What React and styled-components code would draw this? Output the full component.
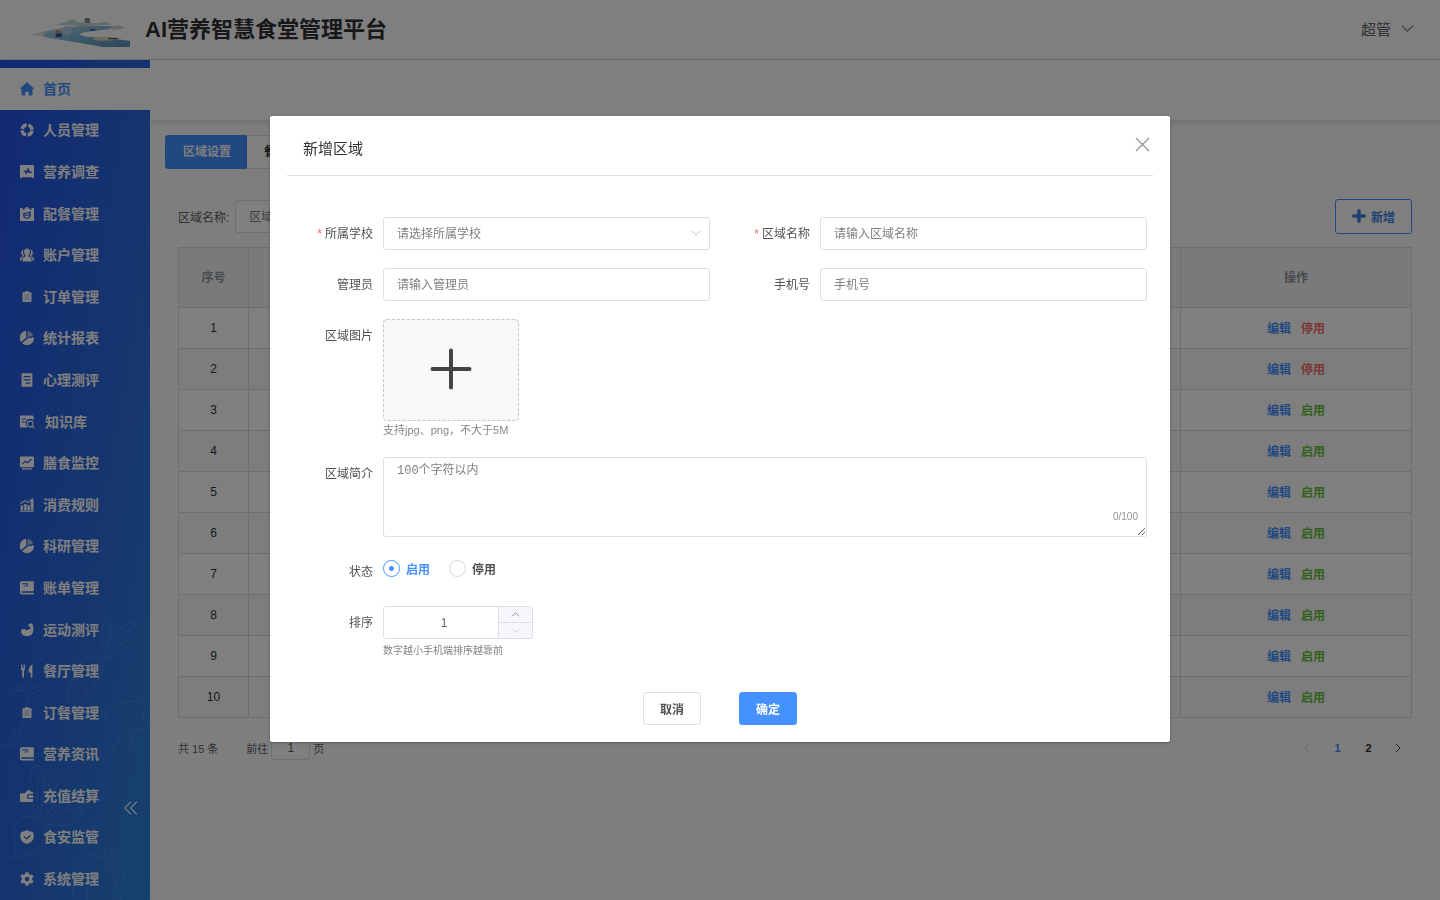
import React, { useState } from 'react';
import styled, { createGlobalStyle } from 'styled-components';

const icons = {
  home: <path d="M7 .4c.3 0 .5.1.7.3l6 5.500c.3.300.2.800-.3.800h-.900v5.600c0 .6-.4 1-1 1H8.800V9.800H5.200v3.800H2.500c-.6 0-1-.4-1-1V7H.6c-.5 0-.6-.5-.3-.8l6-5.500C6.500.5 6.700.4 7 .4z" />,
  ring: (
    <g fill="none" stroke="currentColor" strokeWidth="3.4">
      <circle cx="7" cy="7" r="5" strokeDasharray="6.2 1.65" strokeDashoffset="-0.8" />
    </g>
  ),
  survey: (
    <path fillRule="evenodd" d="M1 0h12a1 1 0 0 1 1 1v12.6l-2.4-1.4H2.4L0 13.6V1a1 1 0 0 1 1-1zM2.400 6.600h2.400l1 3.200 2.200-3.400.8 1.600h2.800V6.400H9.900L8.200 2.600 6.200 6.200l-.6-1z" />
  ),
  meal: (
    <path fillRule="evenodd" d="M0 1h2.600v1.800h1.600V1.400h1.600V0h2.400v1.400h1.600v1.400h1.600V1H14v13H0zM3 7.400c0 2.800 1.600 4.400 4 4.400s4-1.600 4-4.400l-.8-1.200 1-1.400-1.400-.6L8 5.400H5.400L3 6.400zM4.200 7.400l2-.8h2.600l1 1.200H4.200zM4.200 8.800h5.400c-.6 1.300-1.400 1.800-2.600 1.800s-2.200-.5-2.800-1.800z" />
  ),
  users: (
    <g>
      <path d="M7 .4c2 0 3 1.400 3 3.200 0 1.600-.7 2.800-1.400 3.600v1.200c1.600.5 2.900 1.300 2.900 3.200v1.800h-9v-1.800c0-1.900 1.300-2.700 2.900-3.200V7.200C4.700 6.400 4 5.200 4 3.600 4 1.800 5 .4 7 .4z" />
      <path d="M3.400 1.600C1.800 2 1.200 3.200 1.200 4.600c0 1.400.6 2.300 1.200 3v.8C1 9 0 9.600 0 11v1.400h1.600c0-2.200.8-3.500 2.600-4.300C3 6 2.600 3.600 3.400 1.600zM10.600 1.600c1.600.4 2.200 1.600 2.200 3 0 1.400-.6 2.300-1.200 3v.8c1.400.6 2.400 1.200 2.400 2.600v1.400h-1.600c0-2.200-.8-3.500-2.600-4.300 1.200-2.100 1.600-4.500.8-6.500z" />
    </g>
  ),
  order: (
    <g>
      <path d="M5 1.200h4v1.100h1.500c.6 0 1 .4 1 1V11c0 .6-.4 1-1 1h-7c-.6 0-1-.4-1-1V3.300c0-.6.4-1 1-1H5z" />
      <path d="M4.400 5h5.200M4.400 7.100h5.200M4.400 9.200h5.200" stroke="#2a62dc" strokeOpacity="0.5" strokeWidth="1" />
    </g>
  ),
  pie: (
    <g>
      <path d="M6.200 0v6.800L.9 11A7 7 0 0 1 6.200 0zM13.900 6.200A7 7 0 0 1 2 12l6-4.700z" />
      <path opacity="0.6" d="M7.300 0a7 7 0 0 1 5.800 4.500L7.300 6.400z" />
    </g>
  ),
  doc: (
    <path fillRule="evenodd" d="M1.600.3h10.800v13.400H1.600zM3.600 3v1.300h6.800V3zm0 3.200v1.300h6.800V6.200zm2.200 3.300v1.300h4.600V9.500z" />
  ),
  knowledge: (
    <g>
      <path fillRule="evenodd" d="M1 .6h11.600a1 1 0 0 1 1 1v3.900A4.300 4.300 0 0 0 6.500 11c.2.600.5 1 .9 1.400H1a1 1 0 0 1-1-1V1.600a1 1 0 0 1 1-1zM1.600 3.400v1.100h4.800V3.400zm0 2.900v1.100h3.200V6.300z" />
      <circle cx="10.200" cy="9" r="2.900" fill="none" stroke="currentColor" strokeWidth="1.100" />
      <path d="m12 11.700.8-.8 2.100 2.100-.8.800z" />
    </g>
  ),
  monitor: (
    <path fillRule="evenodd" d="M1 .5h12a1 1 0 0 1 1 1v8.700a1 1 0 0 1-1 1H1a1 1 0 0 1-1-1V1.500a1 1 0 0 1 1-1zM2 7.800l.8.800 2.500-2.500 2.300 1.400L12 3.600l-.8-.8-3.800 3.200-2.300-1.400zM2 12.300h10v1.300H2z" />
  ),
  bars: (
    <g>
      <path d="M0 12.800h14v.9H0zM.6 7.600h2.600v4.600H.6zM4.200 6h2.400v6.200H4.200zM7.400 7.200h2.500v5H7.400zM10.800 3l2.700-2.400v11.600h-2.700z" />
      <path d="M.4 5.800 4.800 2.600 8 4.600l5-4.200" fill="none" stroke="currentColor" strokeWidth="1.200" />
    </g>
  ),
  book: (
    <path fillRule="evenodd" d="M1.600.300H13a.8.800 0 0 1 .8.800v9.100H2.200a.8.800 0 0 0 0 1.600h11.600v1.600H1.600A1.600 1.600 0 0 1 0 11.800V1.900A1.600 1.600 0 0 1 1.600.3zM2 2.200v1h4.600v2.600h1.200V2.200zm1.600 2.200v.9H6v-.900z" />
  ),
  muscle: (
    <path d="M8.200 1.400 10.600.2l1.800.7c1 2.600 1.200 5 .8 7.700-.6 3-3 4.600-6 4.600-3.200 0-5.600-1.500-6.200-4.300C.8 7.200 2 6 3.600 6c1.400 0 2.200.6 2.800 1.600.8-.8 2-1.400 3.600-1.300.4-1 .4-1.900.2-2.900l-1.600.2z" />
  ),
  fork: (
    <g>
      <path d="M1 .6h.900v3.600h.7V.6h.9v3.600h.700V.6h.9v4c0 1.100-.5 1.700-1.100 2v6.800H2.200V6.600C1.500 6.300 1 5.700 1 4.600z" />
      <path d="M12.400.6v12.800h-1.700V8.400H8.600c-.1-4 1.300-7 3.800-7.800z" />
    </g>
  ),
  wallet: (
    <path d="M6.200 2.800C6.800 1.500 8 .9 9.400 1.400c.8.3 1.200.8 1.400 1.400h.9c.7 0 1.300.5 1.300 1.200v1H9.300a2.300 2.300 0 0 0 0 5H13v1.800c0 .700-.6 1.200-1.300 1.200H1.300C.6 13 0 12.500 0 11.800V5.500c0-.7.6-1.200 1.300-1.200H5zM9.300 6.200h4v2.600h-4a1.300 1.300 0 0 1 0-2.600z" />
  ),
  shield: (
    <path fillRule="evenodd" d="M7 .1c1.700 1 3.600 1.800 6 2v.9c.6 1.300 1 2.600.7 4.200-.5 3.200-3.100 6-6.700 6.700C3.400 13.200.8 10.400.3 7.200 0 5.600.4 4.300 1 3v-.9c2.400-.2 4.300-1 6-2zM3.600 6.800l3 3 4.300-4-1-1-3.300 3.100-2-2z" />
  ),
  gear: (
    <path fillRule="evenodd" d="M5.600.2h2.800l.5 1.900 1.200.7 1.900-.6 1.500 2.500-1.400 1.400v1.700l1.400 1.400-1.500 2.500-1.900-.6-1.200.7-.5 2H5.600l-.5-2-1.200-.7-1.900.6L.5 9.200l1.400-1.400V6.100L.5 4.700 2 2.200l1.900.6 1.200-.7zM7 4.700a2.300 2.300 0 1 0 0 4.600 2.300 2.300 0 0 0 0-4.600z" />
  ),
};

const menu = [
  { icon: 'home', text: '首页' },
  { icon: 'ring', text: '人员管理' },
  { icon: 'survey', text: '营养调查' },
  { icon: 'meal', text: '配餐管理' },
  { icon: 'users', text: '账户管理' },
  { icon: 'order', text: '订单管理' },
  { icon: 'pie', text: '统计报表' },
  { icon: 'doc', text: '心理测评' },
  { icon: 'knowledge', text: '知识库', wide: true },
  { icon: 'monitor', text: '膳食监控' },
  { icon: 'bars', text: '消费规则' },
  { icon: 'pie', text: '科研管理' },
  { icon: 'book', text: '账单管理' },
  { icon: 'muscle', text: '运动测评' },
  { icon: 'fork', text: '餐厅管理' },
  { icon: 'order', text: '订餐管理' },
  { icon: 'book', text: '营养资讯' },
  { icon: 'wallet', text: '充值结算' },
  { icon: 'shield', text: '食安监管' },
  { icon: 'gear', text: '系统管理' },
];

const rows = [1, 2, 3, 4, 5, 6, 7, 8, 9, 10].map((id) => ({ id, enabled: id < 3 }));

const Chevron = ({ size = 10, rotate = 0, color = 'currentColor' }) => (
  <svg width={size} height={size} viewBox="0 0 12 12" fill="none" stroke={color} strokeWidth="1.100" aria-hidden="true">
    <path d="M1 3.500 6 8.500 11 3.500" transform={`rotate(${rotate} 6 6)`} />
  </svg>
);

const Logo = () => (
  <svg width="100" height="45" viewBox="15 -3 300 135" aria-hidden="true">
    <defs>
      <linearGradient id="river" x1="0" y1="0" x2="1" y2="1">
        <stop offset="0" stopColor="#c8dce4" />
        <stop offset="0.4" stopColor="#84b8d4" />
        <stop offset="1" stopColor="#5490b4" />
      </linearGradient>
      <filter id="soft"><feGaussianBlur stdDeviation="2" /></filter>
    </defs>
    <g filter="url(#soft)">
      <path d="M40 79 66 69 110 60 160 54 250 54 290 58 250 64 182 72Q146 80 186 86L260 92 315 98V117H235Q150 102 95 93 60 90 40 79Z" fill="url(#river)" />
      <path d="M18 81 66 67 52 85Z" fill="#e0ded4" />
      <path d="M90 50 118 44 142 32 158 42 215 46 240 41 262 50 180 54Z" fill="#c4d2d6" />
      <path d="M200 92 240 85 290 90 268 97 220 98Z" fill="#dcd8c4" />
      <path d="M250 92h28" stroke="#505848" strokeWidth="4" />
      <path d="M246 60 282 52 300 60 270 66Z" fill="#c8ccd0" />
      <circle cx="126" cy="68" r="14" fill="#b4c8e8" />
      <path d="M190 62 214 64 204 70Z" fill="#3868c0" />
    </g>
    <rect x="179" y="30" width="16" height="15" rx="4" fill="#7c8c94" />
    <rect x="92" y="76" width="18" height="11" fill="#2050a8" />
    <path d="M92 67h14l2 9H92z" fill="#d89048" />
  </svg>
);

// faint vegetable outlines on the lower part of the sidebar
const Vegetables = () => (
  <Decor viewBox="0 0 450 930" aria-hidden="true">
    <path d="M200 345C205 290 225 225 265 200Q300 190 310 215C312 260 265 310 220 345M265 200q20 12 44 12M300 192C310 150 300 100 322 88c20 0 10 70-12 106M312 194C330 140 370 96 404 98c12 18-50 40-86 96M318 204c30-20 60-56 74-60 6 20-36 54-80 64M225 265l12 6M240 290l14 4M260 235l14 8" />
    <path d="M0 325C30 310 55 290 78 305 92 340 62 370 64 420 60 460 30 480 0 465M78 305q-36-2-28-14c20-6 40 10 56 4l12-10 6 12-18 14-16-2q8 20-6 14M48 420q-4 20-18 28" />
    <path d="M314 380C324 350 366 330 410 334 440 340 452 364 460 390 450 420 410 426 366 412 336 406 316 400 314 380ZM366 412c10 20-20 46-26 66 4 20 36 24 48 8 10-20 6-46 18-64M344 374q4-18 18-26M424 360q12 16 4 28M376 440q-2 14-10 22" />
    <path d="M108 682C84 620 80 540 112 524 140 530 134 620 118 682M118 682C130 620 150 550 186 538 214 550 200 610 124 690M112 560v90M176 580l-36 60M108 682C60 670 30 710 44 756 52 780 44 800 32 806 74 800 120 790 138 740 140 710 130 690 108 682ZM140 690C160 660 210 650 244 660 240 690 190 720 144 702" />
    <path d="M222 930C210 870 230 800 270 792 290 796 300 806 310 796 350 800 386 850 374 890L360 930M262 930C254 880 280 830 312 832 350 840 350 890 340 930M320 830C326 806 306 790 318 776l18 4C332 800 340 820 352 830M244 840q-10 30-2 50" />
  </Decor>
);

const App = () => {
  const [status, setStatus] = useState('on');
  const [sort, setSort] = useState(1);
  const [intro, setIntro] = useState('');
  const [open, setOpen] = useState(true);

  return (
    <>
      <GlobalStyle />
      <Page>
        <Header>
          <Brand>
            <Logo />
            <BrandTitle>AI营养智慧食堂管理平台</BrandTitle>
          </Brand>
          <UserButton type="button">
            超管
            <Chevron size={13} color="#808388" />
          </UserButton>
        </Header>
        <Body>
          <Sidebar>
            <Vegetables />
            <Menu>
              {menu.map((item, i) => (
                <MenuLink key={item.text} href="#" $active={i === 0}>
                  <MenuIcon $wide={item.wide} viewBox={item.wide ? '0 0 16 14' : '0 0 14 14'} aria-hidden="true">
                    {icons[item.icon]}
                  </MenuIcon>
                  <MenuText>{item.text}</MenuText>
                </MenuLink>
              ))}
            </Menu>
            <Collapse type="button" aria-label="收起菜单">
              <svg width="14" height="14" viewBox="0 0 14 14" fill="none" stroke="currentColor" strokeWidth="1.100">
                <path d="M7 .6.800 7 7 13.400M12.800.6 6.600 7l6.200 6.400" />
              </svg>
            </Collapse>
          </Sidebar>
          <Main>
            <SubBar />
            <Content>
              <Tabs>
                <Tab type="button" $active>区域设置</Tab>
                <Tab type="button">餐厅</Tab>
              </Tabs>
              <Panel>
                <Toolbar>
                  <SearchLabel>
                    区域名称:
                    <SearchInput type="text" placeholder="区域名称" />
                  </SearchLabel>
                  <AddButton type="button" onClick={() => setOpen(true)}>
                    <svg width="14" height="14" viewBox="0 0 14 14" fill="none" stroke="currentColor" strokeWidth="3.400" strokeLinecap="round" aria-hidden="true">
                      <path d="M7 1.700v10.600M1.700 7h10.600" />
                    </svg>
                    新增
                  </AddButton>
                </Toolbar>
                <Table>
                  <colgroup>
                    <IndexCol />
                    <col />
                    <ActionCol />
                  </colgroup>
                  <thead>
                    <tr>
                      <th>序号</th>
                      <th />
                      <th>操作</th>
                    </tr>
                  </thead>
                  <tbody>
                    {rows.map((row) => (
                      <tr key={row.id}>
                        <td>{row.id}</td>
                        <td />
                        <td>
                          <Actions>
                            <TextButton type="button" $color="#4592ff">编辑</TextButton>
                            <TextButton type="button" $color={row.enabled ? '#f56c6c' : '#67c23a'}>
                              {row.enabled ? '停用' : '启用'}
                            </TextButton>
                          </Actions>
                        </td>
                      </tr>
                    ))}
                  </tbody>
                </Table>
                <Pagination>
                  <PageInfo>
                    <span>共 15 条</span>
                    <JumpLabel>
                      前往
                      <JumpInput type="text" defaultValue="1" />
                      页
                    </JumpLabel>
                  </PageInfo>
                  <Pager>
                    <PagerButton type="button" aria-label="上一页" $color="#c0c4cc"><Chevron rotate={90} /></PagerButton>
                    <PagerButton type="button" $color="#4592ff">1</PagerButton>
                    <PagerButton type="button">2</PagerButton>
                    <PagerButton type="button" aria-label="下一页"><Chevron rotate={-90} /></PagerButton>
                  </Pager>
                </Pagination>
              </Panel>
            </Content>
          </Main>
        </Body>
      </Page>

      {open && (
        <Mask>
          <Dialog role="dialog" aria-labelledby="dialog-title">
            <DialogHeader>
              <DialogTitle id="dialog-title">新增区域</DialogTitle>
              <CloseButton type="button" aria-label="关闭" onClick={() => setOpen(false)}>
                <svg width="15" height="15" viewBox="0 0 15 15" stroke="currentColor" strokeWidth="1.200" aria-hidden="true">
                  <path d="M1 1l13 13M14 1L1 14" />
                </svg>
              </CloseButton>
            </DialogHeader>
            <Form onSubmit={(e) => e.preventDefault()}>
              <FormGrid>
                <FormItem>
                  <Label htmlFor="school" $required>所属学校</Label>
                  <SelectBox>
                    <Select id="school" defaultValue="">
                      <option value="">请选择所属学校</option>
                    </Select>
                    <SelectArrow><Chevron color="#c0c4cc" /></SelectArrow>
                  </SelectBox>
                </FormItem>
                <FormItem>
                  <Label htmlFor="area" $required>区域名称</Label>
                  <Input id="area" type="text" placeholder="请输入区域名称" />
                </FormItem>
                <FormItem>
                  <Label htmlFor="manager">管理员</Label>
                  <Input id="manager" type="text" placeholder="请输入管理员" />
                </FormItem>
                <FormItem>
                  <Label htmlFor="phone">手机号</Label>
                  <Input id="phone" type="text" placeholder="手机号" />
                </FormItem>
              </FormGrid>
              <FormItem>
                <Label htmlFor="upload">区域图片</Label>
                <Field>
                  <Upload id="upload" type="button">
                    <svg width="42" height="42" viewBox="0 0 42 42" stroke="#444" strokeWidth="4" strokeLinecap="round" aria-hidden="true">
                      <path d="M21 2.500v37M2.500 21h37" />
                    </svg>
                  </Upload>
                  <UploadTip>支持jpg、png，不大于5M</UploadTip>
                </Field>
              </FormItem>
              <FormItem>
                <Label htmlFor="intro">区域简介</Label>
                <TextBox>
                  <TextArea
                    id="intro"
                    maxLength={100}
                    placeholder="100个字符以内"
                    value={intro}
                    onChange={(e) => setIntro(e.target.value)}
                  />
                  <Counter>{intro.length}/100</Counter>
                </TextBox>
              </FormItem>
              <FormItem>
                <Label as="span">状态</Label>
                <RadioGroup>
                  <RadioLabel $checked={status === 'on'}>
                    <Radio type="radio" name="status" checked={status === 'on'} onChange={() => setStatus('on')} />
                    启用
                  </RadioLabel>
                  <RadioLabel $checked={status === 'off'}>
                    <Radio type="radio" name="status" checked={status === 'off'} onChange={() => setStatus('off')} />
                    停用
                  </RadioLabel>
                </RadioGroup>
              </FormItem>
              <FormItem>
                <Label htmlFor="sort">排序</Label>
                <Field>
                  <NumberBox>
                    <NumberInput id="sort" type="number" min="1" value={sort} onChange={(e) => setSort(Number(e.target.value))} />
                    <Steps>
                      <Step type="button" aria-label="增加" onClick={() => setSort(sort + 1)}>
                        <Chevron size={9} rotate={180} />
                      </Step>
                      <Step type="button" aria-label="减少" disabled={sort <= 1} onClick={() => setSort(sort - 1)}>
                        <Chevron size={9} />
                      </Step>
                    </Steps>
                  </NumberBox>
                  <SortTip>数字越小手机端排序越靠前</SortTip>
                </Field>
              </FormItem>
              <Footer>
                <Button type="button" onClick={() => setOpen(false)}>取消</Button>
                <Button type="submit" $primary>确定</Button>
              </Footer>
            </Form>
          </Dialog>
        </Mask>
      )}
    </>
  );
};

export default App;

const GlobalStyle = createGlobalStyle`
  * {
    box-sizing: border-box;
  }
  body {
    margin: 0;
    background: #fcfcfc;
    color: #303133;
    font-family: "Liberation Sans", "Noto Sans CJK SC", sans-serif;
    font-size: 12px;
  }
  button, input, select {
    font-family: inherit;
    font-size: 12px;
  }
  button {
    padding: 0;
    cursor: pointer;
  }
`;

const Page = styled.div`
  display: flex;
  flex-direction: column;
  min-height: 100vh;
`;

const Header = styled.header`
  display: flex;
  align-items: center;
  justify-content: space-between;
  height: 60px;
  padding: 0 26px 0 30px;
  background: #fff;
  border-bottom: 1px solid #d8dadf;
`;

const Brand = styled.div`
  display: flex;
  align-items: center;
  gap: 15px;
`;

const BrandTitle = styled.h1`
  margin: 0;
  font-size: 22px;
  line-height: 32px;
  font-weight: bold;
`;

const UserButton = styled.button`
  display: flex;
  align-items: center;
  gap: 10px;
  padding-bottom: 2px;
  border: 0;
  background: none;
  color: #606266;
  font-size: 15px;
`;

const Body = styled.div`
  display: flex;
  flex: 1;
`;

const Sidebar = styled.aside`
  position: relative;
  display: flex;
  width: 150px;
  padding-top: 8px;
  background: linear-gradient(100deg, #2252e6 0%, #2c6cdc 60%, #2c84dc 100%);
`;

const Decor = styled.svg`
  position: absolute;
  left: 0;
  bottom: 0;
  width: 150px;
  height: 310px;
  fill: none;
  stroke: #fff;
  stroke-width: 4px;
  opacity: 0.08;
`;

const Menu = styled.nav`
  position: relative;
  display: flex;
  flex-direction: column;
  flex: 1;
`;

const MenuLink = styled.a`
  display: flex;
  flex: 1;
  align-items: center;
  gap: 9px;
  min-height: 40px;
  padding-left: 20px;
  background: ${(props) => (props.$active ? '#fff' : 'transparent')};
  color: ${(props) => (props.$active ? '#4592ff' : '#fff')};
  font-size: 14px;
  font-weight: bold;
  text-decoration: none;
`;

const MenuText = styled.span`
  padding-bottom: 2px;
`;

const MenuIcon = styled.svg`
  width: ${(props) => (props.$wide ? '16px' : '14px')};
  height: 14px;
  fill: currentColor;
`;

const Collapse = styled.button`
  position: absolute;
  right: 12px;
  bottom: 85px;
  width: 14px;
  height: 14px;
  border: 0;
  background: none;
  color: #fff;
`;

const Main = styled.main`
  flex: 1;
  min-width: 0;
`;

const SubBar = styled.div`
  height: 60px;
  background: #fff;
  box-shadow: 0 2px 6px rgba(0, 0, 0, 0.12);
`;

const Content = styled.div`
  padding: 15px 15px 0;
`;

const Tabs = styled.div`
  display: flex;
`;

const Tab = styled.button`
  width: 82px;
  height: 34px;
  padding: 0 0 3px 17px;
  border: 1px solid ${(props) => (props.$active ? '#4592ff' : '#dcdfe6')};
  border-left-width: ${(props) => (props.$active ? '1px' : '0')};
  border-radius: ${(props) => (props.$active ? '3px 0 0 3px' : '0 3px 3px 0')};
  background: ${(props) => (props.$active ? '#4592ff' : '#fff')};
  color: ${(props) => (props.$active ? '#fff' : '#303133')};
  font-weight: bold;
  text-align: left;
`;

const Panel = styled.section`
  padding: 30px 13px 0;
`;

const Toolbar = styled.div`
  display: flex;
  align-items: center;
  justify-content: space-between;
  margin-bottom: 13px;
`;

const SearchLabel = styled.label`
  display: flex;
  align-items: center;
  gap: 6px;
  color: #606266;
`;

const Input = styled.input`
  flex: 1;
  min-width: 0;
  height: 33px;
  padding: 0 13px;
  border: 1px solid #dcdfe6;
  border-radius: 3px;
  background: #fff;
  color: #606266;
  outline: none;

  &::placeholder {
    color: #808080;
  }
`;

const SearchInput = styled(Input)`
  width: 160px;
`;

const AddButton = styled.button`
  display: flex;
  align-items: center;
  justify-content: center;
  gap: 5px;
  width: 77px;
  height: 35px;
  padding-bottom: 1px;
  border: 1px solid #4592ff;
  border-radius: 3px;
  background: #fff;
  color: #3a80e0;
  font-weight: bold;
`;

const Table = styled.table`
  width: 100%;
  table-layout: fixed;
  border-collapse: collapse;

  th, td {
    padding: 0;
    border: 1px solid #dcdcdc;
    text-align: center;
  }
  th {
    height: 60px;
    padding-bottom: 2px;
    background: #f5f5f5;
    color: #909399;
    font-weight: bold;
  }
  td {
    height: 41px;
    background: #fff;
  }
  tbody tr:nth-child(even) td {
    background: #fafafa;
  }
`;

const IndexCol = styled.col`
  width: 70px;
`;

const ActionCol = styled.col`
  width: 231px;
`;

const Actions = styled.div`
  display: flex;
  justify-content: center;
  gap: 10px;
  padding-bottom: 2px;
`;

const TextButton = styled.button`
  border: 0;
  background: none;
  color: ${(props) => props.$color};
  font-weight: bold;
`;

const Pagination = styled.div`
  display: flex;
  align-items: center;
  justify-content: space-between;
  margin-top: 18px;
`;

const PageInfo = styled.div`
  display: flex;
  align-items: center;
  gap: 28px;
  color: #606266;
  font-size: 11px;
`;

const JumpLabel = styled.label`
  display: flex;
  align-items: center;
  gap: 3px;
`;

const JumpInput = styled.input`
  width: 39px;
  height: 24px;
  border: 1px solid #dcdfe6;
  border-radius: 3px;
  background: #fff;
  color: #606266;
  text-align: center;
`;

const Pager = styled.div`
  display: flex;
`;

const PagerButton = styled.button`
  display: flex;
  align-items: center;
  justify-content: center;
  width: 31px;
  height: 24px;
  border: 0;
  background: none;
  color: ${(props) => props.$color || '#303133'};
  font-size: 11px;
  font-weight: bold;

  &:last-child {
    width: 28px;
  }
`;

const Mask = styled.div`
  position: fixed;
  inset: 0;
  z-index: 10;
  display: flex;
  align-items: flex-start;
  justify-content: center;
  padding-top: 116px;
  overflow: auto;
  background: rgba(0, 0, 0, 0.5);
`;

const Dialog = styled.div`
  width: 900px;
  max-width: 100%;
  padding: 0 17px;
  border-radius: 2px;
  background: #fff;
  box-shadow: 0 1px 3px rgba(0, 0, 0, 0.3);
`;

const DialogHeader = styled.div`
  display: flex;
  align-items: center;
  justify-content: space-between;
  height: 60px;
  padding: 4px 3px 0 16px;
  border-bottom: 1px solid #dcdfe6;
`;

const DialogTitle = styled.h2`
  margin: 0;
  font-size: 15px;
  font-weight: normal;
`;

const CloseButton = styled.button`
  display: flex;
  height: 22px;
  border: 0;
  background: none;
  color: #909399;
`;

const Form = styled.form`
  display: flex;
  flex-direction: column;
  gap: 18px;
  padding: 41px 6px 17px 0;
`;

const FormGrid = styled.div`
  display: grid;
  grid-template-columns: 1fr 1fr;
  gap: 18px 14px;
`;

const FormItem = styled.div`
  display: flex;
  align-items: flex-start;
`;

const Label = styled.label`
  width: 96px;
  padding-right: 10px;
  color: #505256;
  line-height: 34px;
  text-align: right;
  height: 33px;

  &::before {
    content: ${(props) => (props.$required ? '"*"' : 'none')};
    margin-right: 3px;
    color: #f56c6c;
  }
`;

const Field = styled.div`
  flex: 1;
`;

const SelectBox = styled.div`
  position: relative;
  display: flex;
  flex: 1;
`;

const Select = styled.select`
  flex: 1;
  height: 33px;
  padding: 0 13px;
  border: 1px solid #dcdfe6;
  border-radius: 3px;
  appearance: none;
  background: #fff;
  color: #808080;
`;

const SelectArrow = styled.span`
  position: absolute;
  top: 10px;
  right: 9px;
  pointer-events: none;
`;

const Upload = styled.button`
  display: flex;
  align-items: center;
  justify-content: center;
  width: 136px;
  height: 102px;
  padding-bottom: 2px;
  border: 1px dashed #c8c8c8;
  border-radius: 4px;
  background: #f8f8f8;
`;

const UploadTip = styled.div`
  color: #888;
  font-size: 11px;
  line-height: 18px;
`;

const TextBox = styled.div`
  position: relative;
  display: flex;
  flex: 1;
`;

const TextArea = styled.textarea`
  flex: 1;
  height: 80px;
  padding: 5px 13px;
  border: 1px solid #dcdfe6;
  border-radius: 3px;
  resize: vertical;
  outline: none;
  color: #606266;
  font-family: "Liberation Mono", "Noto Sans CJK SC", monospace;
  font-size: 12px;
  line-height: 16px;

  &::placeholder {
    color: #808080;
  }
`;

const Counter = styled.span`
  position: absolute;
  right: 9px;
  bottom: 14px;
  color: #909399;
  font-size: 10px;
  line-height: 12px;
`;

const RadioGroup = styled.div`
  display: flex;
  gap: 19px;
`;

const RadioLabel = styled.label`
  display: flex;
  align-items: center;
  gap: 6px;
  height: 26px;
  color: ${(props) => (props.$checked ? '#4592ff' : '#505256')};
  font-weight: bold;
`;

const Radio = styled.input`
  width: 17px;
  height: 17px;
  margin: 0;
  border: 1px solid #d4d6dc;
  border-radius: 50%;
  appearance: none;
  background: #fff;

  &:checked {
    border-color: #4592ff;
    background: radial-gradient(circle, #4592ff 2px, #fff 3px);
  }
`;

const NumberBox = styled.div`
  display: flex;
  width: 150px;
  height: 33px;
  border: 1px solid #dcdfe6;
  border-radius: 3px;
  overflow: hidden;
`;

const NumberInput = styled.input`
  flex: 1;
  min-width: 0;
  padding: 0 0 0 6px;
  border: 0;
  outline: none;
  appearance: textfield;
  color: #606266;
  text-align: center;

  &::-webkit-inner-spin-button {
    appearance: none;
    display: none;
  }
`;

const Steps = styled.div`
  display: flex;
  flex-direction: column;
  width: 34px;
  border-left: 1px solid #dcdfe6;
`;

const Step = styled.button`
  display: flex;
  flex: 1;
  align-items: center;
  justify-content: center;
  border: 0;
  background: #f5f7fa;
  color: #808388;

  & + & {
    border-top: 1px solid #dcdfe6;
  }
  &:disabled {
    color: #c8cbd2;
  }
`;

const SortTip = styled.div`
  color: #808388;
  font-size: 10px;
  line-height: 24px;
`;

const Footer = styled.div`
  display: flex;
  justify-content: center;
  gap: 38px;
  padding: 11px 0 0 6px;
`;

const Button = styled.button`
  width: 58px;
  height: 33px;
  padding-bottom: 1px;
  border: 1px solid ${(props) => (props.$primary ? '#4592ff' : '#dcdfe6')};
  border-radius: 3px;
  background: ${(props) => (props.$primary ? '#4592ff' : '#fff')};
  color: ${(props) => (props.$primary ? '#fff' : '#505256')};
  font-weight: bold;
`;
